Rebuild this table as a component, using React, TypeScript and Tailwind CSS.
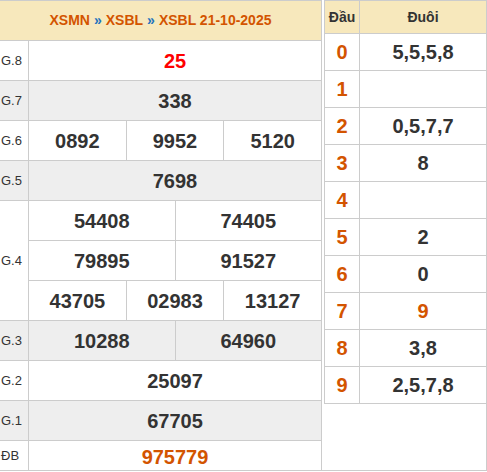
import React from "react";

const font = { fontFamily: '"Liberation Sans", Arial, sans-serif' };

function Cell({ children, className = "" }: { children?: React.ReactNode; className?: string }) {
  return (
    <div className={`flex items-center justify-center text-[20px] font-bold text-[#333] ${className}`}>
      {children}
    </div>
  );
}

function Row({
  label,
  values,
  gray,
  color,
  h = "h-[40px]",
}: {
  label: string;
  values: string[];
  gray?: boolean;
  color?: string;
  h?: string;
}) {
  return (
    <div className={`flex ${h} border-b border-[#ccc] ${gray ? "bg-[#eeeeee]" : "bg-white"}`}>
      <div className="w-[29px] shrink-0 border-r border-[#ccc] flex items-center pl-[1px] text-[13px] text-[#333]">
        {label}
      </div>
      <div className="flex flex-1">
        {values.map((v, i) => (
          <Cell key={i} className={`flex-1 basis-0 ${i > 0 ? "border-l border-[#ccc]" : ""} ${color ?? ""}`}>
            {v}
          </Cell>
        ))}
      </div>
    </div>
  );
}

const loto: [string, string][] = [
  ["0", "5,5,5,8"],
  ["1", ""],
  ["2", "0,5,7,7"],
  ["3", "8"],
  ["4", ""],
  ["5", "2"],
  ["6", "0"],
  ["7", "9"],
  ["8", "3,8"],
  ["9", "2,5,7,8"],
];

export default function App() {
  return (
    <div className="flex w-[487px] h-[472px] bg-white" style={font}>
      {/* Left results table */}
      <div className="w-[321px] shrink-0 flex flex-col">
        <div className="h-[41px] border-t border-b border-[#ccc] bg-[#f7e8bc] flex items-center justify-center text-[14px] font-bold text-[#d35400]">
          <span>XSMN</span>
          <span className="text-[#1e73be] mx-[4px]">»</span>
          <span>XSBL</span>
          <span className="text-[#1e73be] mx-[4px]">»</span>
          <span>XSBL 21-10-2025</span>
        </div>
        <Row label="G.8" values={["25"]} color="!text-[#ff0000]" />
        <Row label="G.7" values={["338"]} gray />
        <Row label="G.6" values={["0892", "9952", "5120"]} />
        <Row label="G.5" values={["7698"]} gray />
        <div className="flex h-[120px] border-b border-[#ccc] bg-white">
          <div className="w-[29px] shrink-0 border-r border-[#ccc] flex items-center pl-[1px] text-[13px] text-[#333]">
            G.4
          </div>
          <div className="flex flex-col flex-1">
            <div className="flex h-[40px] border-b border-[#ccc]">
              <Cell className="flex-1 basis-0">54408</Cell>
              <Cell className="flex-1 basis-0 border-l border-[#ccc]">74405</Cell>
            </div>
            <div className="flex h-[40px] border-b border-[#ccc]">
              <Cell className="flex-1 basis-0">79895</Cell>
              <Cell className="flex-1 basis-0 border-l border-[#ccc]">91527</Cell>
            </div>
            <div className="flex flex-1">
              <Cell className="flex-1 basis-0">43705</Cell>
              <Cell className="flex-1 basis-0 border-l border-[#ccc]">02983</Cell>
              <Cell className="flex-1 basis-0 border-l border-[#ccc]">13127</Cell>
            </div>
          </div>
        </div>
        <Row label="G.3" values={["10288", "64960"]} gray />
        <Row label="G.2" values={["25097"]} />
        <Row label="G.1" values={["67705"]} gray />
        <Row label="ĐB" values={["975779"]} color="!text-[#d35400] pt-[3px]" h="h-[30px]" />
      </div>

      {/* Right loto table */}
      <div className="w-[166px] h-[471px] shrink-0 border-l border-r border-b border-[#ccc] pl-[2px]">
        <div className="border-l border-t border-[#ccc]">
          <div className="flex h-[33px] border-b border-[#ccc] bg-[#f7e8bc] text-[14px] font-bold text-[#333]">
            <div className="w-[35px] shrink-0 border-r border-[#ccc] flex items-center justify-center">Đầu</div>
            <div className="flex-1 flex items-center justify-center">Đuôi</div>
          </div>
          {loto.map(([d, t]) => (
            <div key={d} className="flex h-[37px] border-b border-[#ccc] bg-white">
              <div className="w-[35px] shrink-0 border-r border-[#ccc] flex items-center justify-center text-[20px] font-bold text-[#d35400]">
                {d}
              </div>
              <div
                className={`flex-1 flex items-center justify-center text-[20px] font-bold ${
                  d === "7" ? "text-[#d35400]" : "text-[#333]"
                }`}
              >
                {t}
              </div>
            </div>
          ))}
        </div>
      </div>
    </div>
  );
}
